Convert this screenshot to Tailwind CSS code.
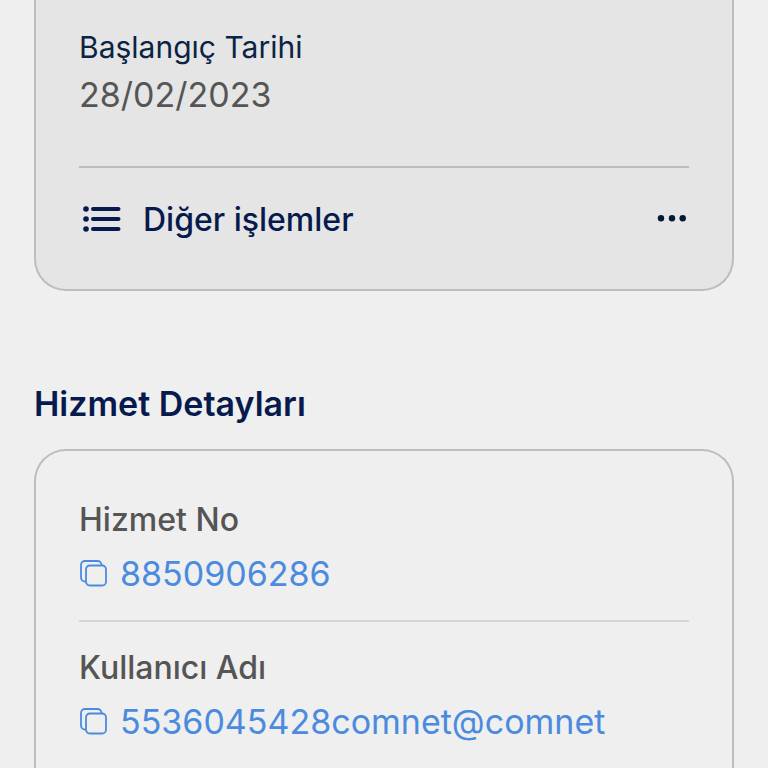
<!DOCTYPE html>
<html lang="tr">

<head>
    <meta charset="UTF-8">
    <meta name="viewport" content="width=device-width, initial-scale=1.0">
    <title>Hizmet Detayları</title>
    <script src="https://cdn.jsdelivr.net/npm/@tailwindcss/browser@4"></script>
</head>

<body class="min-h-screen overflow-x-hidden bg-[#efefef] font-['Inter',sans-serif] text-[#555555]">
    <main class="px-[34px]">
        <!-- Subscription card -->
        <section class="rounded-b-[32px] border-x-2 border-b-2 border-[#bdbdbd] bg-[#e5e5e5] px-[43px] pt-[27px] pb-[49px]">
            <dl>
                <dt class="text-[30px] leading-10 text-[#0b2344]">Başlangıç Tarihi</dt>
                <dd class="mt-1 text-[34px] leading-12">28/02/2023</dd>
            </dl>
            <button type="button"
                class="mt-[47px] flex w-full items-center border-t-2 border-[#bdbdbd] pt-8 text-left text-[32px] leading-10 font-medium text-[#071a4d]">
                <svg class="ml-1 h-7 w-10" viewBox="0 0 40 28" fill="currentColor" aria-hidden="true">
                    <circle cx="3" cy="3" r="2.8" />
                    <circle cx="3" cy="13" r="2.8" />
                    <circle cx="3" cy="23" r="2.8" />
                    <rect x="8" y="1" width="29.5" height="4" rx="2" />
                    <rect x="8" y="11" width="29.5" height="4" rx="2" />
                    <rect x="8" y="21" width="29.5" height="4" rx="2" />
                </svg>
                <span class="ml-5">Diğer işlemler</span>
                <svg class="mr-0.5 ml-auto h-3 w-8 text-[#041a33]" viewBox="0 0 32 12" fill="currentColor" aria-hidden="true">
                    <circle cx="6" cy="4.3" r="3.2" />
                    <circle cx="17" cy="4.3" r="3.2" />
                    <circle cx="27.7" cy="4.3" r="3.2" />
                </svg>
            </button>
        </section>

        <!-- Service details -->
        <h2 class="mt-[93px] text-[34px] leading-10 font-semibold text-[#071a4d]">Hizmet Detayları</h2>

        <section class="mt-[25px] rounded-t-[32px] border-x-2 border-t-2 border-[#bdbdbd] px-[43px] pt-[49px] pb-8">
            <div class="border-b-2 border-[#d6d6d6] pb-[22px]">
                <h3 class="text-[32px] leading-10 font-medium">Hizmet No</h3>
                <button type="button" class="mt-2.5 flex items-center gap-[13px] text-[34px] leading-12 text-[#4a8be0]">
                    <svg class="h-7 w-7" viewBox="0 0 28 28" fill="none" stroke="currentColor" stroke-width="1.8" aria-hidden="true">
                        <rect x="7" y="5.5" width="20" height="20" rx="3.8" />
                        <path d="M7 21.5H6a4 4 0 0 1-4-4V5a4 4 0 0 1 4-4h12.500a4 4 0 0 1 4 4v0.500" />
                    </svg>
                    <span>8850906286</span>
                </button>
            </div>
            <div class="pt-[26px] pb-6">
                <h3 class="text-[32px] leading-10 font-medium">Kullanıcı Adı</h3>
                <button type="button" class="mt-2.5 flex items-center gap-[13px] text-[34px] leading-12 text-[#4a8be0]">
                    <svg class="h-7 w-7" viewBox="0 0 28 28" fill="none" stroke="currentColor" stroke-width="1.8" aria-hidden="true">
                        <rect x="7" y="5.5" width="20" height="20" rx="3.8" />
                        <path d="M7 21.5H6a4 4 0 0 1-4-4V5a4 4 0 0 1 4-4h12.500a4 4 0 0 1 4 4v0.500" />
                    </svg>
                    <span>5536045428comnet@comnet</span>
                </button>
            </div>
        </section>
    </main>
</body>

</html>
